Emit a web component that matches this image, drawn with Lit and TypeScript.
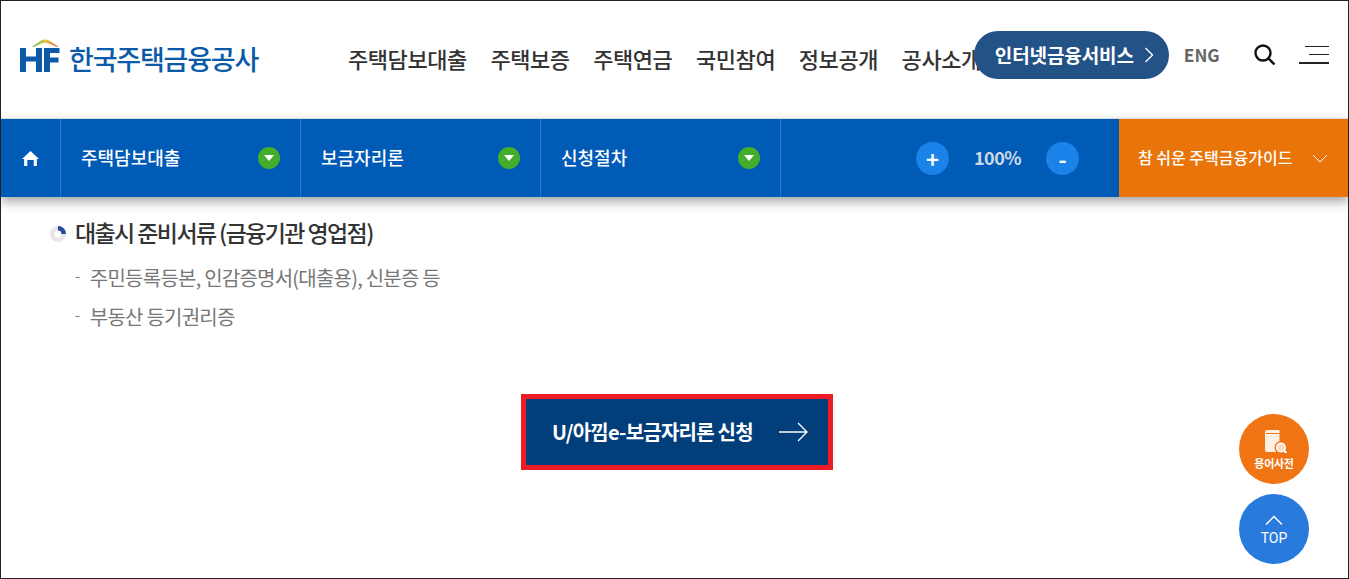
import { LitElement, html, css } from "lit";
import { customElement } from "lit/decorators.js";

@customElement("app-root")
export class AppRoot extends LitElement {
  static styles = css`
    :host { display: block; font-family: "Noto Sans CJK KR", "Noto Sans", sans-serif; }
    * { box-sizing: border-box; }
    .frame { position: relative; width: 1349px; height: 579px; border: 1px solid #222; background: #fff; overflow: hidden; }
    header { height: 117px; display: flex; align-items: center; padding: 0 0 10px 19px; }
    .logo { display: flex; align-items: center; gap: 9px; width: 328px; flex: none; margin-top: 8px; }
    .logo svg { display: block; flex: none; margin-top: -6px; }
    .logo span { font-size: 27px; font-weight: 500; color: #0b5aa9; letter-spacing: -1.2px; line-height: 40px; white-space: nowrap; }
    .gnb { display: flex; gap: 23.6px; flex: none; margin-top: 6px; font-size: 22px; font-weight: 500; color: #333; letter-spacing: -0.44px; white-space: nowrap; }
    .pill { margin-left: -7px; position: relative; flex: none; width: 195px; height: 48px; border-radius: 24px; background: #235287; color: #fff; font-size: 19px; font-weight: 700; display: flex; align-items: center; gap: 10px; padding-left: 21px; letter-spacing: -0.1px; white-space: nowrap; }
    .eng { margin-left: 15px; font-size: 17.3px; font-weight: 700; color: #666; flex: none; width: 70px; }
    .search { flex: none; display: block; }
    .ham { margin-left: 24px; flex: none; display: flex; flex-direction: column; align-items: flex-end; width: 30px; }
    .ham i { display: block; height: 1.5px; background: #222; margin-bottom: 6.5px; }
    .ham i:nth-child(1) { width: 24px; }
    .ham i:nth-child(2) { width: 20px; }
    .ham i:nth-child(3) { width: 30px; height: 2px; margin-bottom: 0; }
    nav { position: relative; z-index: 2; height: 79px; border-top: 1px solid #ddd; background: #005bb7; box-shadow: 0 5px 10px rgba(0,0,0,.35); display: flex; color: #fff; }
    .home { width: 60px; flex: none; display: flex; align-items: center; justify-content: center; border-right: 1px solid #2f78c2; }
    .crumb { width: 240px; flex: none; display: flex; align-items: center; justify-content: space-between; padding: 0 20px; border-right: 1px solid #2f78c2; font-size: 18px; font-weight: 500; }
    .crumb b { font-weight: 500; margin-bottom: 2px; }
    .dot { width: 22px; height: 22px; border-radius: 50%; background: #44ae2b; display: flex; align-items: center; justify-content: center; }
    .dot::after { content: ""; border: 5px solid transparent; border-top: 6px solid #fff; border-bottom: 0; }
    .zoom { flex: 1; display: flex; align-items: center; padding-left: 135px; }
    .zbtn { width: 33px; height: 33px; border-radius: 50%; background: #1a82e8; font-size: 22px; font-weight: 700; display: flex; align-items: center; justify-content: center; line-height: 1; }
    .pct { width: 97px; text-align: center; font-size: 18px; font-weight: 700; color: #cfd9e6; letter-spacing: -0.5px; margin-bottom: 2px; }
    .guide { width: 229px; flex: none; background: #e9750a; display: flex; align-items: center; padding-left: 19px; font-size: 16px; font-weight: 500; gap: 20px; white-space: nowrap; }
    .guide b { font-weight: 500; margin-bottom: 2px; }
    main { padding: 19px 0 0 49px; }
    h2 { margin: 0; height: 36px; display: flex; align-items: center; gap: 10px; font-size: 23px; font-weight: 500; color: #333; letter-spacing: -1.6px; line-height: 36px; white-space: nowrap; }
    h2 svg { flex: none; }
    h2 span { margin-bottom: 5px; margin-left: -1px; }
    ul { list-style: none; margin: 6px 0 0 25px; padding: 0; color: #777; font-size: 20px; letter-spacing: -0.77px; }
    li { height: 39px; line-height: 39px; display: flex; gap: 10px; white-space: nowrap; }
    li::before { content: "-"; font-size: 14px; line-height: 34px; color: #777; letter-spacing: 0; }
    .cta-wrap { display: flex; justify-content: center; margin-top: 58px; margin-left: -44px; }
    .cta { width: 312px; height: 76px; border: 5px solid #ed1c24; background: #023e7a; color: #fff; display: flex; align-items: center; gap: 26px; padding-left: 26px; font-size: 20px; font-weight: 700; letter-spacing: -0.77px; white-space: nowrap; }
    .cta b { font-weight: 700; margin-bottom: 2px; }
    .fab { position: absolute; left: 1238px; width: 70px; height: 70px; border-radius: 50%; color: #fff; display: flex; flex-direction: column; align-items: center; }
    .dict { top: 413px; background: #f07314; padding-top: 16px; font-size: 11px; font-weight: 700; }
    .dict svg { display: block; margin-left: 3px; }
    .dict span { line-height: 15px; margin-top: 3px; letter-spacing: -0.3px; }
    .top { top: 493px; background: #287bdc; padding-top: 21px; font-family: Roboto, sans-serif; font-size: 14px; }
    .top svg { display: block; }
    .top span { line-height: 18px; margin-top: 4px; }
  `;

  render() {
    return html`
      <div class="frame">
        <header>
          <div class="logo">
            <svg width="40" height="33" viewBox="0 0 40 33">
              <defs>
                <linearGradient id="roof" x1="0" x2="1" y1="0" y2="0">
                  <stop offset="0" stop-color="#5f9e3a"/><stop offset=".3" stop-color="#9ccb3c"/><stop offset=".55" stop-color="#f0c040"/><stop offset=".8" stop-color="#ee7a1c"/><stop offset="1" stop-color="#a8703a"/>
                </linearGradient>
              </defs>
              <path d="M12 8 L21 1.500 Q25 -0.600 29 1.500 L38.500 8 L37 8 L29 4.600 Q25 3 21 4.600 L13.500 8 Z" fill="url(#roof)"/>
              <path d="M0 9h6v8.500h10V9h6v24h-6V22.500H6V33H0zM24 9h15.500v5H30v4.500h8.500v5H30V33h-6z" fill="#0b5aa9"/>
            </svg>
            <span>한국주택금융공사</span>
          </div>
          <div class="gnb"><span>주택담보대출</span><span>주택보증</span><span>주택연금</span><span>국민참여</span><span>정보공개</span><span>공사소개</span></div>
          <div class="pill">인터넷금융서비스
            <svg width="10" height="16" viewBox="0 0 10 16" fill="none" stroke="#fff" stroke-width="1.4"><path d="M1.500 1l7 7-7 7"/></svg>
          </div>
          <div class="eng">ENG</div>
          <svg class="search" width="21" height="21" viewBox="0 0 21 21" fill="none" stroke="#111" stroke-width="2.4"><circle cx="9" cy="9" r="7.500"/><path d="M14.500 14.500l6 6"/></svg>
          <div class="ham"><i></i><i></i><i></i></div>
        </header>
        <nav>
          <div class="home">
            <svg width="17" height="15" viewBox="0 0 16 14" fill="#fff"><path d="M8 0 L16 7.500 H14 V14 H11 V8.500 H5 V14 H2 V7.500 H0 Z"/></svg>
          </div>
          <div class="crumb"><b>주택담보대출</b><span class="dot"></span></div>
          <div class="crumb"><b>보금자리론</b><span class="dot"></span></div>
          <div class="crumb"><b>신청절차</b><span class="dot"></span></div>
          <div class="zoom">
            <div class="zbtn">+</div><div class="pct">100%</div><div class="zbtn">-</div>
          </div>
          <div class="guide"><b>참 쉬운 주택금융가이드</b>
            <svg width="16" height="9" viewBox="0 0 16 9" fill="none" stroke="#fff" stroke-width="1"><path d="M1 1l7 7 7-7"/></svg>
          </div>
        </nav>
        <main>
          <h2>
            <svg width="16" height="16" viewBox="0 0 16 16"><circle cx="8" cy="8" r="8" fill="#e6e6ea"/><path d="M8 0A8 8 0 0 1 16 8H11A3 3 0 0 0 8 5Z" fill="#2b4a9b"/><circle cx="8" cy="8" r="3.400" fill="#fff"/></svg>
            <span>대출시 준비서류 (금융기관 영업점)</span>
          </h2>
          <ul>
            <li>주민등록등본, 인감증명서(대출용), 신분증 등</li>
            <li>부동산 등기권리증</li>
          </ul>
          <div class="cta-wrap">
            <div class="cta"><b>U/아낌e-보금자리론 신청</b>
              <svg width="29" height="20" viewBox="0 0 29 20" fill="none" stroke="#fff" stroke-width="1.3"><path d="M0 10h28M19 1l9 9-9 9"/></svg>
            </div>
          </div>
        </main>
        <div class="fab dict">
          <svg width="22" height="23" viewBox="0 0 22 23">
            <path d="M0 2Q0 0 2 0H14.500V22H2Q0 22 0 20Z" fill="#fff0e4"/>
            <path d="M1 3.500H14.500" stroke="#f07314" stroke-width="1" fill="none"/>
            <circle cx="16" cy="17.500" r="6.500" fill="#f07314"/>
            <circle cx="16" cy="17.500" r="4.300" fill="#fbd9bf" stroke="#fff" stroke-width="1.600"/>
            <path d="M19 20.500l2.500 2.500" stroke="#fff" stroke-width="2.200"/>
          </svg>
          <span>용어사전</span>
        </div>
        <div class="fab top">
          <svg width="18" height="10" viewBox="0 0 18 10" fill="none" stroke="#fff" stroke-width="1.500"><path d="M1 9.500L9 1.500l8 8"/></svg>
          <span>TOP</span>
        </div>
      </div>
    `;
  }
}
